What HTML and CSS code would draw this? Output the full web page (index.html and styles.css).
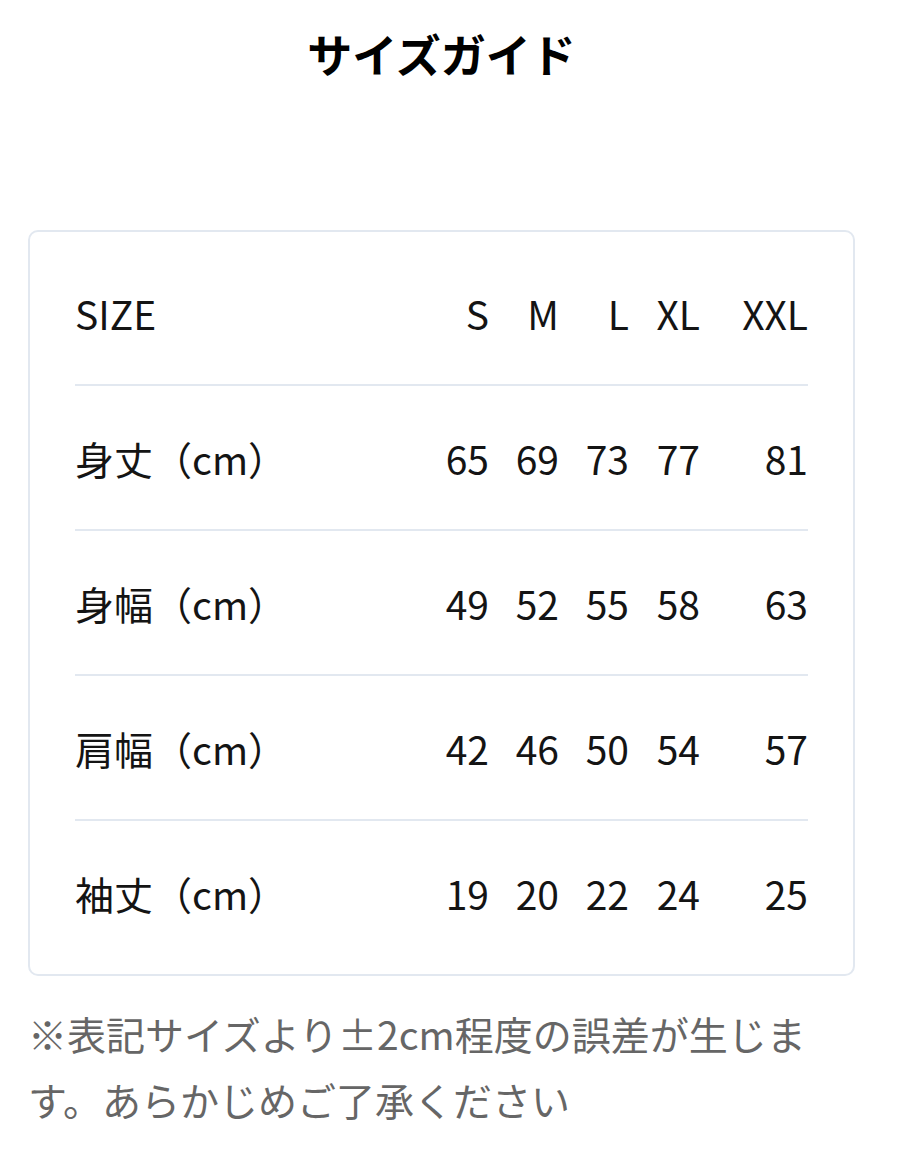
FILE: index.html
```html
<!DOCTYPE html>
<html lang="ja">
<head>
<meta charset="utf-8">
<title>サイズガイド</title>
<link rel="stylesheet" href="styles.css">
</head>
<body>
<main class="page">
  <h1 class="title">サイズガイド</h1>
  <section class="card">
    <div class="row head">
      <div class="label">SIZE</div>
      <div class="num">S</div>
      <div class="num">M</div>
      <div class="num">L</div>
      <div class="num">XL</div>
      <div class="num">XXL</div>
    </div>
    <div class="row">
      <div class="label">身丈（cm）</div>
      <div class="num">65</div><div class="num">69</div><div class="num">73</div><div class="num">77</div><div class="num">81</div>
    </div>
    <div class="row">
      <div class="label">身幅（cm）</div>
      <div class="num">49</div><div class="num">52</div><div class="num">55</div><div class="num">58</div><div class="num">63</div>
    </div>
    <div class="row">
      <div class="label">肩幅（cm）</div>
      <div class="num">42</div><div class="num">46</div><div class="num">50</div><div class="num">54</div><div class="num">57</div>
    </div>
    <div class="row last">
      <div class="label">袖丈（cm）</div>
      <div class="num">19</div><div class="num">20</div><div class="num">22</div><div class="num">24</div><div class="num">25</div>
    </div>
  </section>
  <p class="note">※表記サイズより±2cm程度の誤差が生じます。あらかじめご了承ください</p>
</main>
</body>
</html>
```

FILE: styles.css
```css
html, body {
  margin: 0;
  padding: 0;
  background: #ffffff;
}
body {
  font-family: "Noto Sans CJK JP", "Noto Sans", sans-serif;
  color: #141414;
}
.page {
  width: 827px;
  margin-left: 28px;
  padding-top: 24px;
}
.title {
  margin: 0;
  text-align: center;
  font-size: 45px;
  font-weight: 700;
  line-height: 60px;
  color: #000;
}
.card {
  margin-top: 146px;
  border: 2px solid #e2e8f0;
  border-radius: 10px;
  padding: 9px 45px 10px;
}
.row {
  display: grid;
  grid-template-columns: 1fr 70px 70px 70px 71px 108px;
  align-items: center;
  height: 143px;
  border-bottom: 2px solid #e2e8f0;
  font-size: 39px;
}
.row.last {
  border-bottom: none;
}
.label {
  text-align: left;
}
.num {
  text-align: right;
}
.note {
  margin: 24px 0 0;
  width: 815px;
  font-size: 39px;
  line-height: 66px;
  color: #666666;
}
```
